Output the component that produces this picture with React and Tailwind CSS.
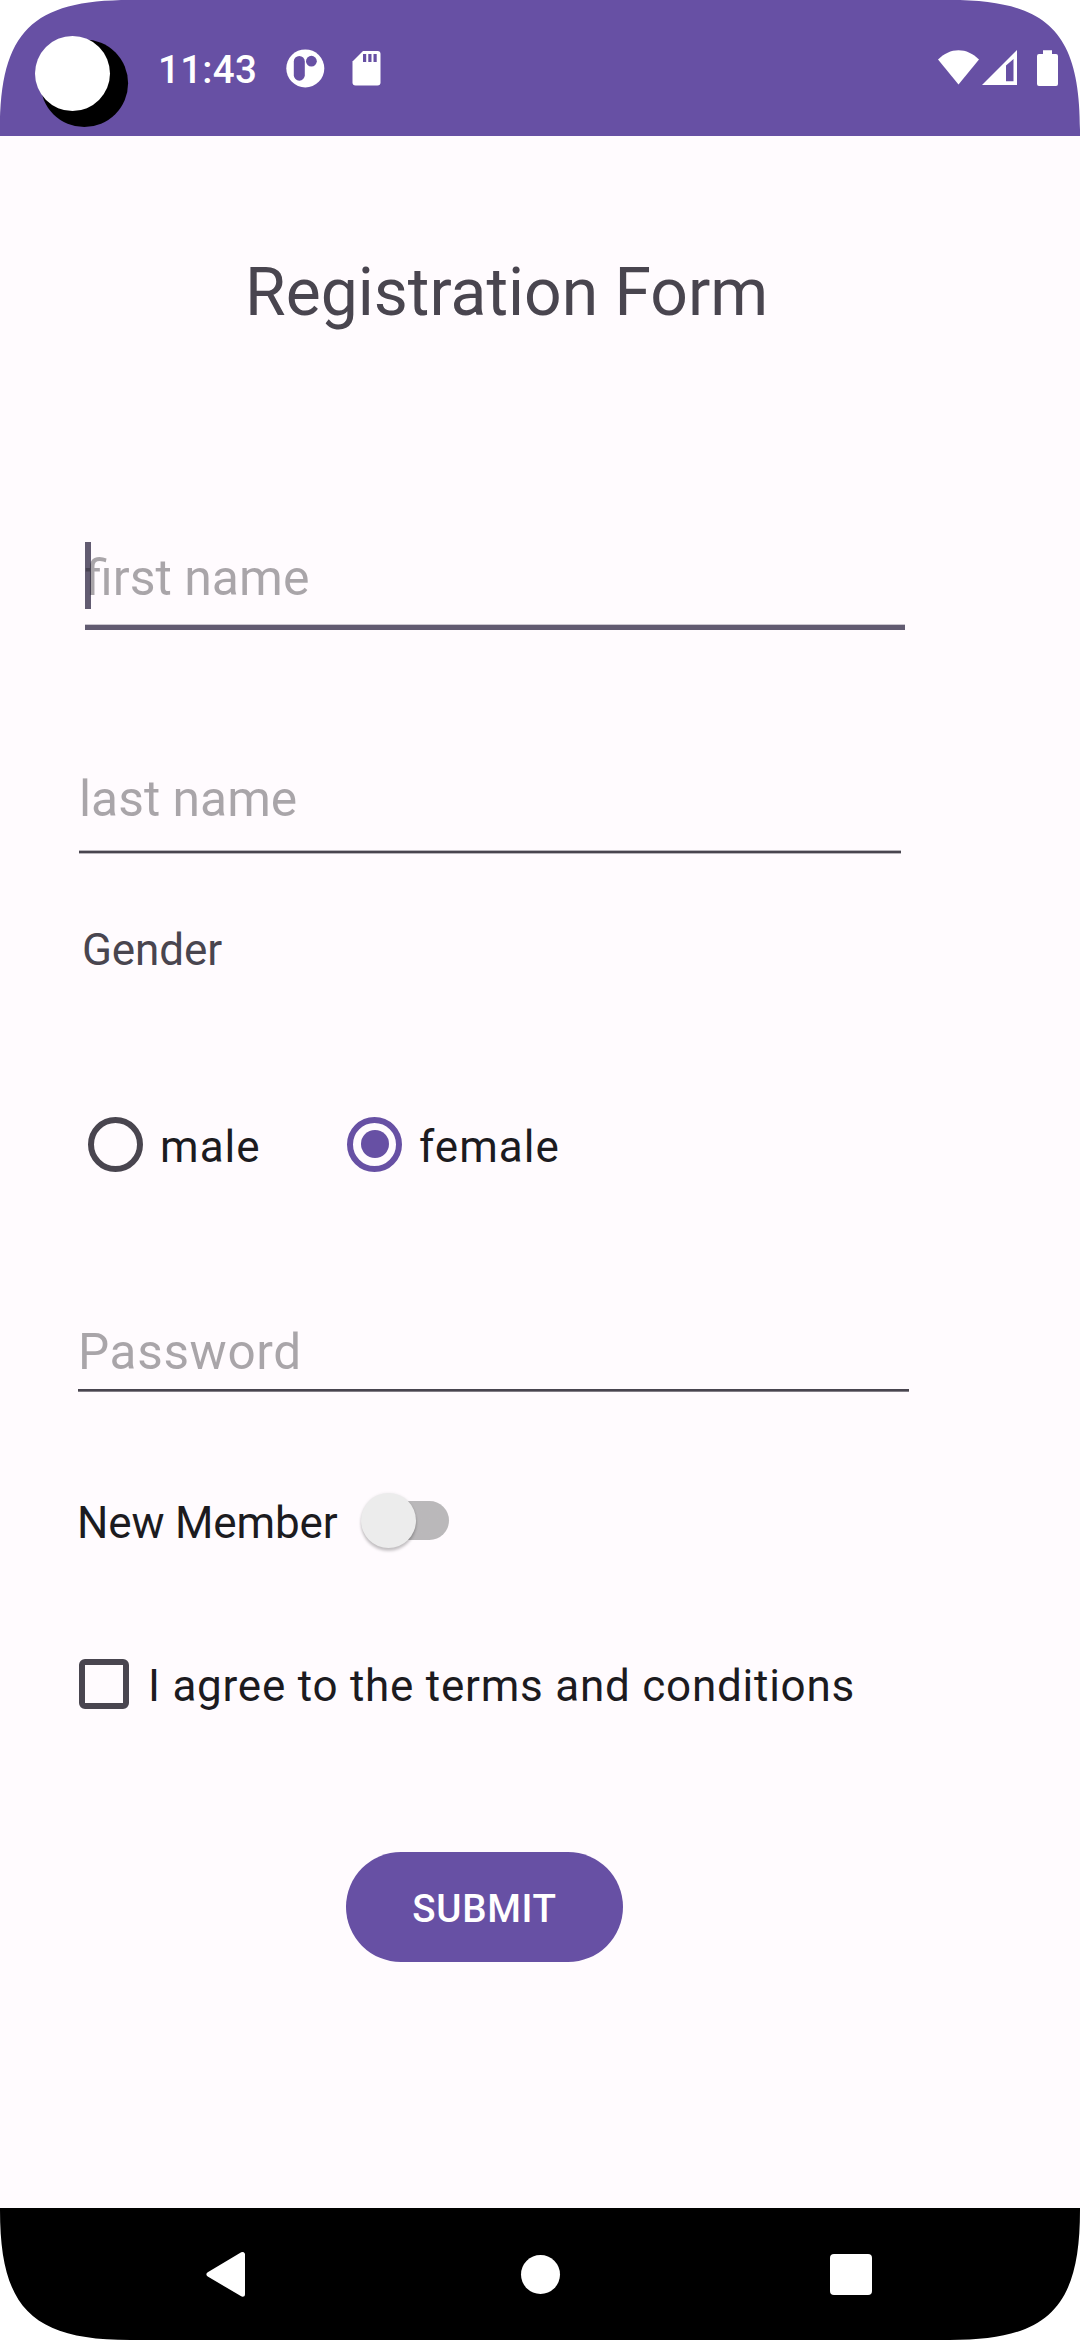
function StatusBar() {
  return (
    <header className="relative flex h-[136px] shrink-0 items-start bg-[#6750a4] text-white">
      {/* Camera cutout */}
      <svg className="ml-[35px] mt-[36px] h-[92px] w-[94px]" viewBox="35 36 94 92">
        <circle cx="84.3" cy="83.2" r="43.8" fill="#000" />
        <circle cx="72.5" cy="73.5" r="37.5" fill="#fff" />
      </svg>
      <span className="ml-[29px] mt-[40px] w-[112px] text-[38.5px] font-medium leading-[60px] tracking-[0.3px]">11:43</span>
      <svg className="ml-[16px] mt-[49px] h-[39px] w-[39px]" viewBox="286 49 39 39">
        <circle cx="305.3" cy="68.4" r="19" fill="#fff" />
        <rect x="293.8" y="56" width="11" height="24.7" rx="5.5" fill="#6750a4" />
        <circle cx="311.4" cy="61.2" r="5.4" fill="#6750a4" />
      </svg>
      <svg className="ml-[26px] mt-[50px] h-[37px] w-[31px]" viewBox="351 50 31 37">
        <path d="M363 51h14.5a3 3 0 0 1 3 3v28.5a3 3 0 0 1-3 3h-22a3 3 0 0 1-3-3V61.500Z" fill="#fff" />
        <path d="M363 54h3.200v8h-3.200zM368.300 54h3.200v8h-3.200zM373.500 54h3.200v8h-3.200z" fill="#6750a4" />
      </svg>
      <svg className="ml-auto mr-[21px] mt-[49px] h-[38px] w-[122px]" viewBox="937 49 122 38" fill="#fff">
        <path d="M938 59.500C944 53.500 951 50.200 958.500 50.200S973 53.500 979 59.500L958.500 84.500Z" />
        <path d="M982 85L1017 50V85ZM1006 65.500V81.200H1013.500V59Z" fillRule="evenodd" />
        <path d="M1043 50.200h9v3.800h4a2 2 0 0 1 2 2v28a2 2 0 0 1-2 2h-17a2 2 0 0 1-2-2v-28a2 2 0 0 1 2-2h4z" />
      </svg>
    </header>
  );
}

function Radio({ label, checked }) {
  return (
    <div className="flex h-[60px] items-center" role="radio" aria-checked={checked}>
      <span
        className={
          "flex h-[55px] w-[55px] items-center justify-center rounded-full border-[6px] " +
          (checked ? "border-[#6750a4]" : "border-[#49454f]")
        }
      >
        {checked && <span className="h-[28px] w-[28px] rounded-full bg-[#6750a4]" />}
      </span>
      <span className="ml-[17px] mt-[6px] text-[44px] leading-[60px] tracking-[1.05px] text-[#1c1b1f]">{label}</span>
    </div>
  );
}

function NavBar() {
  return (
    <nav className="flex h-[132px] shrink-0 items-center bg-black">
      <svg className="ml-[205px] h-[48px] w-[42px]" viewBox="205 2250 42 48">
        <path
          d="M209 2274.300L242.500 2254.500V2294.200Z"
          fill="#fff"
          stroke="#fff"
          strokeWidth="5"
          strokeLinejoin="round"
        />
      </svg>
      <span className="ml-[274px] h-[39px] w-[39px] rounded-full bg-white" />
      <span className="ml-[270px] mt-px h-[41.5px] w-[41.5px] rounded-[4px] bg-white" />
    </nav>
  );
}

function Corner({ className }) {
  return (
    <svg className={"absolute h-[130px] w-[130px] " + className} viewBox="0 0 130 130">
      <path d="M0 0V130C0 32 32 0 130 0Z" fill="#fff" />
    </svg>
  );
}

export default function App() {
  return (
    <div className="relative flex h-[2340px] w-[1080px] flex-col overflow-hidden bg-[#fffbfe] font-['Roboto',sans-serif] whitespace-nowrap">
      <StatusBar />
      <main className="flex flex-1 flex-col items-start">
        <h1 className="ml-[245px] mt-[113px] h-[88px] text-[66px] leading-[88px] text-[#49454f]">Registration Form</h1>

        <div className="relative ml-[85px] mt-[205px] flex h-[88px] w-[820px] flex-col justify-between">
          <span className="absolute left-0 top-0 h-[67px] w-[6px] bg-[#625b71]" />
          <span className="relative text-[50px] leading-[72px] text-[#1c1b1f]/38">first name</span>
          <span className="h-[6px] border-t border-[#cbc6cf] bg-[#625b71]" />
        </div>

        <div className="ml-[79px] mt-[133px] flex h-[91px] w-[822px] flex-col justify-between">
          <span className="text-[49.8px] leading-[72px] text-[#1c1b1f]/38">last name</span>
          <span className="h-[4px] border-y border-[#b9b5bb] bg-[#49454f]" />
        </div>

        <div className="ml-[82px] mt-[66px] h-[60px] text-[44px] leading-[60px] tracking-[-0.1px] text-[#49454f]">
          Gender
        </div>

        <div className="ml-[88px] mt-[134px] flex" role="radiogroup">
          <div className="w-[259px]">
            <Radio label="male" checked={false} />
          </div>
          <Radio label="female" checked />
        </div>

        <div className="ml-[78px] mt-[142px] flex h-[76px] w-[831px] flex-col justify-between">
          <span className="text-[49.5px] leading-[72px] tracking-[0.65px] text-[#1c1b1f]/38">Password</span>
          <span className="h-[3px] border-b border-[#827e86] bg-[#49454f]" />
        </div>

        <div className="ml-[77px] mt-[98px] flex h-[60px] items-center">
          <span className="mt-[5px] w-[283.500px] text-[44px] leading-[60px] tracking-[-0.15px] text-[#1c1b1f]">
            New Member
          </span>
          <span className="flex h-[39px] w-[88px] items-center rounded-full bg-gradient-to-r from-transparent from-20% to-[#bab8ba] to-20%">
            <span className="h-[55px] w-[55px] shrink-0 rounded-full bg-[#ececec] shadow-[0_3px_3px_rgba(0,0,0,0.22),0_0_3px_rgba(0,0,0,0.08)]" />
          </span>
        </div>

        <div className="ml-[79px] mt-[104px] flex h-[60px] items-center">
          <span className="h-[50px] w-[50px] rounded-[6px] border-[6px] border-[#49454f]" />
          <span className="ml-[19px] mt-[3px] text-[44px] leading-[60px] tracking-[0.76px] text-[#1c1b1f]">
            I agree to the terms and conditions
          </span>
        </div>

        <button className="ml-[346px] mt-[138px] flex h-[110px] w-[277px] items-center justify-center rounded-full bg-[#6750a4] pt-[3px] text-[38.5px] font-medium leading-[60px] tracking-[0.7px] text-white">
          SUBMIT
        </button>
      </main>
      <NavBar />
      <Corner className="left-0 top-0" />
      <Corner className="right-0 top-0 -scale-x-100" />
      <Corner className="bottom-0 left-0 -scale-y-100" />
      <Corner className="bottom-0 right-0 -scale-100" />
    </div>
  );
}
